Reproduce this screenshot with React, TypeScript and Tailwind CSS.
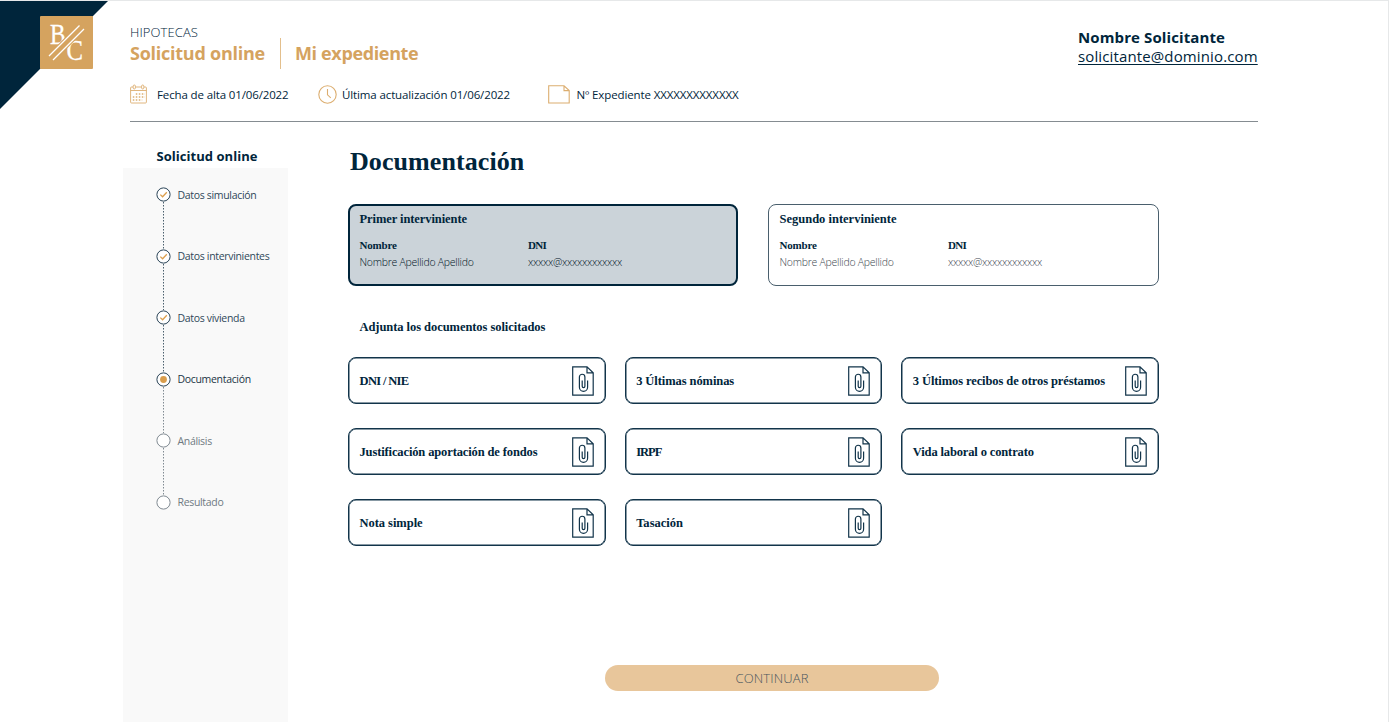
import React from "react";

const serif = "font-['Liberation_Serif',serif] font-bold";

function Corner() {
  return (
    <svg className="absolute -top-px left-0" width="110" height="110" viewBox="0 0 110 110">
      <path d="M0 1H108L0 109Z" fill="#00253b" />
      <rect x="40" y="16" width="53" height="53" rx="1" fill="#d5a35f" />
      <g fill="#fff" stroke="#fff" strokeWidth="0.3" fontFamily="'Liberation Serif', serif">
        <text x="50" y="44.3" fontSize="29" textLength="15.5" lengthAdjust="spacingAndGlyphs">B</text>
        <text x="66.5" y="60" fontSize="29" textLength="16.5" lengthAdjust="spacingAndGlyphs">C</text>
      </g>
      <path d="M49 56L79.5 25.5M53 60L84 29" stroke="#d5a35f" strokeWidth="3.5" />
      <path d="M49 56L79.5 25.5M53 60L84 29" stroke="#fff" strokeWidth="1.3" />
    </svg>
  );
}

function CalendarIcon() {
  return (
    <svg width="18" height="20" viewBox="0 0 18 20" fill="none" stroke="#dcae70" strokeWidth="0.9">
      <path d="M3 3H1.5Q.6 3 .6 4V18Q.6 19 1.5 19H15.5Q16.4 19 16.4 18V4Q16.4 3 15.5 3H14M5.5 3H11.5M.6 6.5H16.4" />
      <rect x="3.2" y="1" width="2.2" height="4" rx="1.1" />
      <rect x="11.6" y="1" width="2.2" height="4" rx="1.1" />
      <path d="M5.8 10H15M2.8 13H15M2.8 16H12.2" strokeWidth="1.5" strokeDasharray="1.5 1.5" />
    </svg>
  );
}

function ClockIcon() {
  return (
    <svg width="19" height="19" viewBox="0 0 19 19" fill="none" stroke="#dcae70" strokeWidth="1.1">
      <circle cx="9.5" cy="9.5" r="8.7" />
      <path d="M9.5 4V9.8L12.8 12.8" />
    </svg>
  );
}

function FolderIcon() {
  return (
    <svg width="22" height="19" viewBox="0 0 22 19" fill="none" stroke="#dcae70" strokeWidth="1.1">
      <path d="M.7 .8H16L21.2 5.6V18H.7ZM16 .8V5.6H21.2" />
    </svg>
  );
}

function AttachIcon() {
  return (
    <svg width="22" height="30" viewBox="0 0 22 30" fill="none" stroke="#12344a" strokeWidth="1.2">
      <path d="M.7 .9H15L21.2 6.8V29.1H.7ZM15 .9V6.8H21.2" />
      <path d="M15.6 14.5V21.3A4.1 4.1 0 0 1 7.4 21.3V11A2.7 2.7 0 0 1 12.9 11V20.3A1.3 1.3 0 0 1 10.2 20.3V14.5" />
    </svg>
  );
}

type State = "done" | "current" | "pending";

function StepIcon({ state }: { state: State }) {
  return (
    <svg width="15" height="15" viewBox="0 0 15 15" fill="none" className="shrink-0">
      <circle cx="7.5" cy="7.5" r="6.6" fill="#fff" stroke={state === "pending" ? "#808a92" : "#2a4457"} />
      {state === "done" && <path d="M4.3 7.6L6.6 9.8L10.8 5.2" stroke="#dc9f4e" strokeWidth="1.3" />}
      {state === "current" && <circle cx="7.5" cy="7.5" r="3.4" fill="#d99d4c" />}
    </svg>
  );
}

const steps: { label: string; state: State }[] = [
  { label: "Datos simulación", state: "done" },
  { label: "Datos intervinientes", state: "done" },
  { label: "Datos vivienda", state: "done" },
  { label: "Documentación", state: "current" },
  { label: "Análisis", state: "pending" },
  { label: "Resultado", state: "pending" },
];

const docs: [string, string][] = [
  ["DNI / NIE", "tracking-[-0.65px]"],
  ["3 Últimas nóminas", "tracking-[-0.08px]"],
  ["3 Últimos recibos de otros préstamos", "tracking-[-0.1px]"],
  ["Justificación aportación de fondos", "tracking-[-0.13px]"],
  ["IRPF", "tracking-[-1px]"],
  ["Vida laboral o contrato", "tracking-[-0.14px]"],
  ["Nota simple", "tracking-[-0.04px]"],
  ["Tasación", "tracking-[0.02px]"],
];

function Person({ title, active }: { title: string; active?: boolean }) {
  const value = `text-[10.5px] font-light leading-[19px] ${active ? "text-[#00151f]" : "text-[#3d4850]"}`;
  return (
    <div
      className={
        active
          ? "h-[82px] w-[390px] rounded-[8px] border-2 border-[#00253b] bg-[#cbd3d9] px-[9.5px] pt-[4.5px]"
          : "h-[82px] w-[391px] rounded-[8px] border border-[#4a5f6d] px-[10.5px] pt-[5.5px]"
      }
    >
      <h2 className={`${serif} text-[12.5px] leading-[16px] ${active ? "tracking-[-0.08px]" : ""}`}>{title}</h2>
      <div className="mt-[11px] grid grid-cols-[168.5px_1fr]">
        <span className={`${serif} text-[11px] leading-[15px] tracking-[-0.2px]`}>Nombre</span>
        <span className={`${serif} text-[11px] leading-[15px] tracking-[-0.7px]`}>DNI</span>
        <span className={`${value} tracking-[-0.26px]`}>Nombre Apellido Apellido</span>
        <span className={`${value} tracking-[-0.23px]`}>xxxxx@xxxxxxxxxxxx</span>
      </div>
    </div>
  );
}

export default function App() {
  return (
    <div className="relative h-[722px] w-full overflow-hidden border-r border-t border-[#e6e8e9] bg-white font-['Open_Sans',sans-serif] text-[#00253b]">
      <Corner />
      <header className="ml-[130px] flex h-[121px] w-[1128px] flex-col border-b border-[#858c91]">
        <div className="flex justify-between">
          <div className="pt-[22px]">
            <p className="h-[15px] text-[13px] font-light leading-[18px] tracking-[0.1px]">HIPOTECAS</p>
            <div className="flex h-[31px] text-[18px] font-bold leading-[30px] text-[#d5a35f]">
              <span className="w-[135px] whitespace-nowrap tracking-[-0.25px]">Solicitud online</span>
              <span className="ml-[15px] w-px bg-[#e3bf8c]" />
              <span className="ml-[14px] tracking-[-0.36px]">Mi expediente</span>
            </div>
          </div>
          <div className="w-[180px] pt-[27px]">
            <p className="whitespace-nowrap text-[15px] font-bold leading-[19px] tracking-[0.11px]">Nombre Solicitante</p>
            <p className="text-[15px] leading-[19px] tracking-[0.13px] underline decoration-1 underline-offset-2">solicitante@dominio.com</p>
          </div>
        </div>
        <div className="mt-[14px] flex h-[22px] items-center text-[11.5px]">
          <CalendarIcon />
          <span className="ml-[9px] w-[161px] pt-px tracking-[-0.13px]">Fecha de alta 01/06/2022</span>
          <ClockIcon />
          <span className="ml-[5px] w-[206px] pt-px tracking-[-0.12px]">Última actualización 01/06/2022</span>
          <FolderIcon />
          <span className="ml-[6.5px] pt-px tracking-[-0.12px]">Nº Expediente XXXXXXXXXXXXX</span>
        </div>
      </header>
      <div className="flex">
        <aside className="ml-[123px] w-[165px]">
          <h2 className="h-[46px] pl-[33.5px] pt-[25px] text-[13px] font-bold leading-[18px] tracking-[0.04px]">Solicitud online</h2>
          <ol className="h-[555px] bg-[#f9f9f9] pl-[33px] pt-[19px]">
            {steps.map((s, i) => (
              <li key={s.label} className="h-[61.5px]">
                <div className={`flex h-[15px] items-center text-[10.5px] ${s.state === "pending" ? "text-[#6f7a82]" : s.state === "current" ? "text-[#1c3545]" : "text-[#2f485a]"}`}>
                  <StepIcon state={s.state} />
                  <span className="ml-[6.5px] whitespace-nowrap pt-[2px] tracking-[-0.32px]">{s.label}</span>
                </div>
                {i < 5 && (
                  <svg width="15" height="46.5" viewBox="0 0 15 46.5" className="block">
                    <path d="M7.5 0V46.5" stroke={i < 3 ? "#4a5f6d" : "#808a92"} strokeDasharray="1.5 1.5" />
                  </svg>
                )}
              </li>
            ))}
          </ol>
        </aside>
        <main className="ml-[60px] w-[811px]">
          <h1 className={`${serif} h-[82px] pl-[2px] pt-[24px] text-[26px] leading-[32px] tracking-[0.08px]`}>Documentación</h1>
          <div className="flex justify-between">
            <Person title="Primer interviniente" active />
            <Person title="Segundo interviniente" />
          </div>
          <h2 className={`${serif} mt-[33px] h-[38px] pl-[11.5px] text-[12.5px] leading-[16px] tracking-[-0.06px]`}>Adjunta los documentos solicitados</h2>
          <div className="grid grid-cols-3 gap-x-[19px] gap-y-[24px]">
            {docs.map(([d, tracking]) => (
              <div key={d} className="flex h-[47px] items-center justify-between rounded-[8px] border border-[#12344a] pl-[10.5px] pr-[11px] shadow-[inset_0_0_0_0.5px_#12344a]">
                <span className={`${serif} pt-px text-[12.5px] ${tracking}`}>{d}</span>
                <AttachIcon />
              </div>
            ))}
          </div>
          <button className="ml-[257px] mt-[119px] block h-[26px] w-[334px] rounded-full bg-[#e8c69b] pt-px text-[13px] font-light tracking-[0.15px] text-[#4a565e]">CONTINUAR</button>
        </main>
      </div>
    </div>
  );
}
